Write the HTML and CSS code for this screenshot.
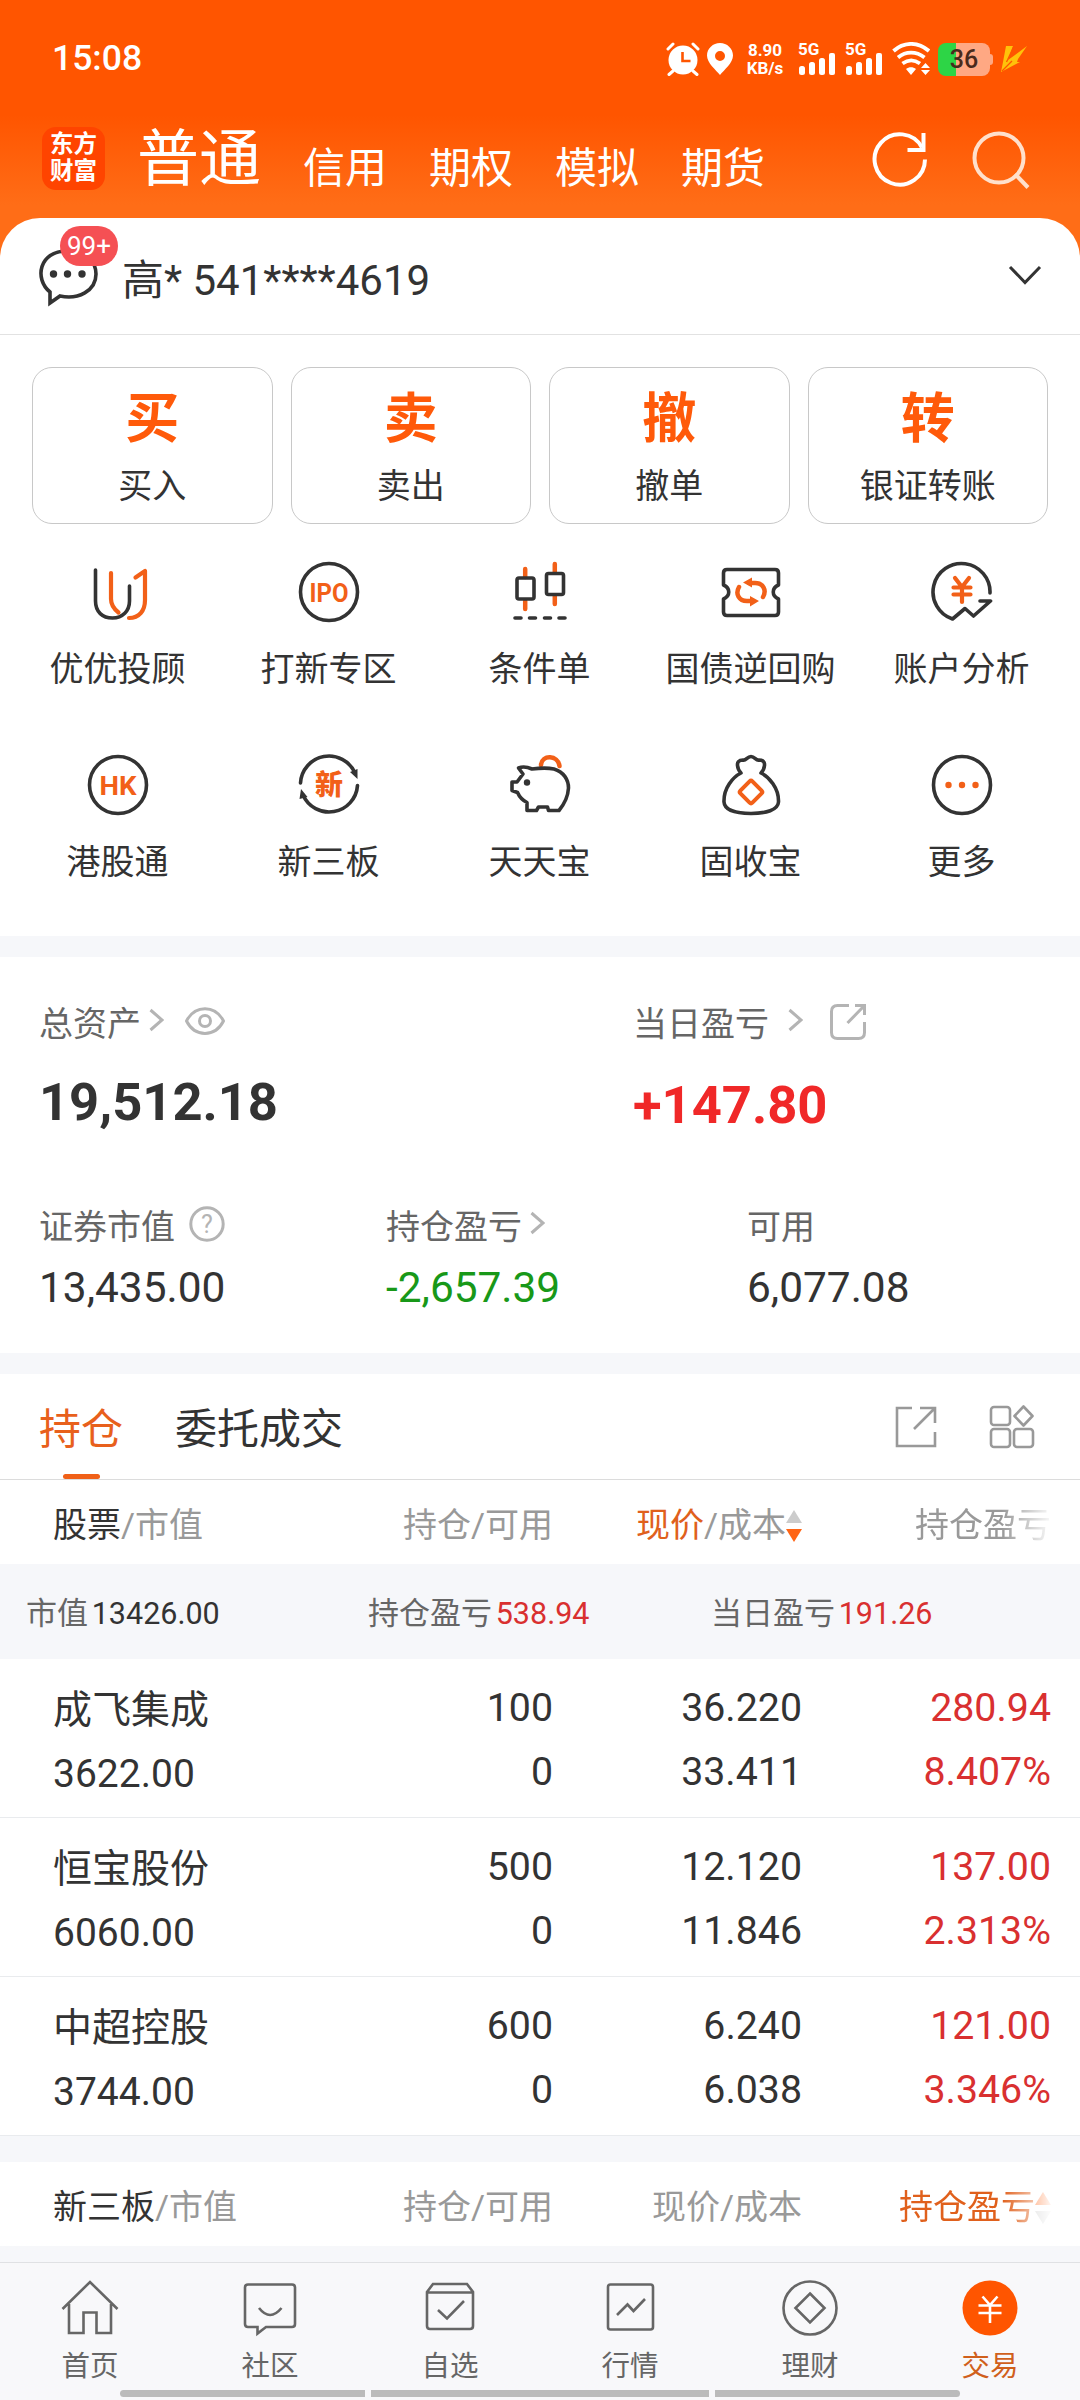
FILE: index.html
```html
<!DOCTYPE html>
<html lang="zh-CN">
<head>
  <meta charset="UTF-8" />
  <meta name="viewport" content="width=device-width, initial-scale=1.0">
  <title>交易</title>
  <link rel="stylesheet" href="styles.css">
</head>
<body>
  <header class="header">
    <div class="status-bar">
      <span class="time">15:08</span>
      <div class="status-icons">
        <svg class="alarm" width="34" height="34" viewBox="0 0 34 34">
          <circle cx="17" cy="18" r="14.500" fill="#fff"/>
          <path d="M2 7l5-5M32 7l-5-5M7 29l-4 3.500M27 29l4 3.500" stroke="#fff" stroke-width="3" stroke-linecap="round"/>
          <path d="M16.500 10v9h8" fill="none" stroke="#ff5500" stroke-width="2.600"/>
        </svg>
        <svg class="pin" width="26" height="34" viewBox="0 0 26 34">
          <path fill="#fff" fill-rule="evenodd" d="M13 1C6 1 0 6.500 0 13.500 0 21 9 28 13 33c4-5 13-12 13-19.500C26 6.500 20 1 13 1zm0 8a5 5 0 1 1 0 10 5 5 0 0 1 0-10z"/>
        </svg>
        <div class="speed"><span>8.90</span><span>KB/s</span></div>
        <div class="signal">
          <span>5G</span>
          <svg width="38" height="34" viewBox="0 0 38 34" fill="#fff">
            <rect x="1" y="24" width="6" height="9" rx="2.500"/><rect x="11" y="20" width="6" height="13" rx="2.500"/>
            <rect x="21" y="16" width="6" height="17" rx="2.500"/><rect x="31" y="11" width="6" height="22" rx="2"/>
          </svg>
        </div>
        <div class="signal">
          <span>5G</span>
          <svg width="38" height="34" viewBox="0 0 38 34" fill="#fff">
            <rect x="1" y="24" width="6" height="9" rx="2.500"/><rect x="11" y="20" width="6" height="13" rx="2.500"/>
            <rect x="21" y="16" width="6" height="17" rx="2.500"/><rect x="31" y="11" width="6" height="22" rx="2"/>
          </svg>
        </div>
        <svg class="wifi" width="38" height="34" viewBox="0 0 38 34">
          <path d="M1.500 9C12-.500 26-.500 37 9M6 15.500c8-6.500 18-6.500 26.500 0M10.500 21.500c5.500-4 12-4 17.500 0" fill="none" stroke="#fff" stroke-width="3.800"/>
          <path d="M14 27c3-2.500 7-2.500 10 0l-5 6zM33.500 21l4.500 5h-9zM33.500 33l-4.500-5h9z" fill="#fff"/>
        </svg>
        <div class="battery">36</div>
        <svg class="bolt" width="26" height="28" viewBox="0 0 26 28">
          <path d="M5 1h7L7 15l7-5L26 1 17 14l-1 3h3L0 27 2 17z" fill="#ffc20a"/>
          <path d="M13 1L6.500 15l-1 2M1 26l10-10" fill="none" stroke="#ff5500" stroke-width="1.300"/>
        </svg>
      </div>
    </div>
    <nav class="top-nav">
      <div class="logo">东方<br>财富</div>
      <span class="current">普通</span>
      <span>信用</span>
      <span>期权</span>
      <span>模拟</span>
      <span>期货</span>
      <div class="top-actions">
        <svg width="56" height="56" viewBox="0 0 56 56" fill="none" stroke="#fff" stroke-width="4">
          <path d="M53 28.500A25.200 25.200 0 1 1 50 16.500"/><path d="M51.500 2v17H35.500"/>
        </svg>
        <svg width="58" height="58" viewBox="0 0 58 58" fill="none" stroke="#ffe0cc" stroke-width="4">
          <circle cx="27" cy="27" r="24.500"/><path d="M43 43l13 13.500"/>
        </svg>
      </div>
    </nav>
  </header>

  <section class="account">
    <div class="message">
      <svg width="60" height="60" viewBox="0 0 60 60">
        <path d="M12 45C-4 32 1 4 29 4c19 0 29 11 29 23 0 17-18 26-36 22L12 56z" fill="none" stroke="#333" stroke-width="3.600"/>
        <circle cx="15.500" cy="27" r="3.700" fill="#333"/><circle cx="29.500" cy="27" r="3.700" fill="#333"/><circle cx="44" cy="27" r="3.700" fill="#333"/>
      </svg>
      <span class="badge">99+</span>
    </div>
    <span class="account-name">高* 541****4619</span>
    <svg class="arrow-down" width="34" height="20" viewBox="0 0 34 20"><path d="M2 2l15 15.500L32 2" fill="none" stroke="#333" stroke-width="3"/></svg>
  </section>

  <section class="actions">
    <div class="action"><b>买</b><span>买入</span></div>
    <div class="action"><b>卖</b><span>卖出</span></div>
    <div class="action"><b>撤</b><span>撤单</span></div>
    <div class="action"><b>转</b><span>银证转账</span></div>
  </section>

  <section class="functions">
    <div class="function">
      <svg viewBox="0 0 64 64">
        <path d="M9.500 10v31c0 11 7 17 17 17s17-7 17-17V26"/>
        <path class="orange" d="M25 13v26c0 6 3 10 7.500 13.500M49.500 17.500l9.500-6.500v29c0 11-6 18-16 18" stroke-width="4.200"/>
      </svg>
      <span>优优投顾</span>
    </div>
    <div class="function">
      <svg viewBox="0 0 64 64"><circle cx="32" cy="32" r="28.500"/><text class="latin" x="32" y="41.500" textLength="39" lengthAdjust="spacingAndGlyphs">IPO</text></svg>
      <span>打新专区</span>
    </div>
    <div class="function">
      <svg viewBox="0 0 64 64">
        <path class="orange" d="M17.200 9v8M17.200 41v8M46.800 4v8M46.800 36v8" stroke-width="4.500"/>
        <rect x="9" y="18" width="17" height="21" rx="2"/><rect x="38.500" y="13.500" width="17" height="21" rx="2"/>
        <path d="M7 58h6M21.500 58h6M36.500 58h6M51 58h6"/>
      </svg>
      <span>条件单</span>
    </div>
    <div class="function">
      <svg viewBox="0 0 64 64">
        <path d="M8 9.500h48q3.500 0 3.500 3.500v12c-7 3-7 11 0 14v13q0 3.500-3.500 3.500H8q-3.500 0-3.500-3.500V39c7-3 7-11 0-14V13q0-3.500 3.500-3.500z"/>
        <path class="orange" d="M20 27c-4 7 0 14 8 14h6M44 37c4-7 0-14-8-14h-6" stroke-width="4.500"/>
        <path class="orange-fill" d="M24 22.500l9-5v10zM40 41l-9 5.500V36z"/>
      </svg>
      <span>国债逆回购</span>
    </div>
    <div class="function">
      <svg viewBox="0 0 64 64">
        <path d="M60 33A28.500 28.500 0 1 0 22.500 59l12.500-10.500 8.500 7.500L60.500 41H50"/>
        <path class="orange" d="M25 18l7 9 7-9M23.500 27.500h17M23.500 34.500h17M32 28v14" stroke-width="4.200"/>
      </svg>
      <span>账户分析</span>
    </div>
    <div class="function">
      <svg viewBox="0 0 64 64"><circle cx="32" cy="32" r="28.500"/><text class="latin" x="32" y="41.500" textLength="37" lengthAdjust="spacingAndGlyphs">HK</text></svg>
      <span>港股通</span>
    </div>
    <div class="function">
      <svg viewBox="0 0 64 64">
        <path d="M3.500 30A28.500 28.500 0 0 1 58 20M60.500 32.500A28.500 28.500 0 0 1 6 42"/>
        <path class="dark-fill" d="M53 19l7.500-3v10zM10.500 44L2.500 46l1.500-10z"/>
        <text x="32" y="42" font-size="28">新</text>
      </svg>
      <span>新三板</span>
    </div>
    <div class="function">
      <svg viewBox="0 0 64 64">
        <path class="orange" d="M33 12c1-11 17-10 18.500 1" stroke-width="4.500"/>
        <path d="M10.500 15c5-2 9-1 13.500 1 8-1 17-1 22 0 10 3 14.500 11 14.500 19-.500 9-5 17-9.500 22.500H40.500l-1-3.500h-9l-2 3.500h-9.500V49.500C14 47 11.500 44 9.500 39.500l-5.500-2V29h5l6-8z"/>
        <circle class="dark-fill" cx="19" cy="29.500" r="3.200"/>
      </svg>
      <span>天天宝</span>
    </div>
    <div class="function">
      <svg viewBox="0 0 64 64">
        <path d="M22 20c-3-3-7-13 2-13 3 1 4-3.500 8-3.500S37 8 40 7c9 0 5 10 2 13 8 4 18 15 17.500 29C59 57 47 60.500 32 60.500S5.500 57 5 49C4.500 35 14 24 22 20z"/>
        <rect class="orange" x="23.500" y="30.500" width="17" height="17" rx="2" transform="rotate(45 32 39)" stroke-width="4"/>
      </svg>
      <span>固收宝</span>
    </div>
    <div class="function">
      <svg viewBox="0 0 64 64">
        <circle cx="32" cy="32" r="28.500"/>
        <g class="orange-fill"><circle cx="18.500" cy="32" r="3.200"/><circle cx="32" cy="32" r="3.200"/><circle cx="45.500" cy="32" r="3.200"/></g>
      </svg>
      <span>更多</span>
    </div>
  </section>

  <section class="assets">
    <div class="asset total-asset">
      <div class="label">总资产
        <svg class="chevron" width="15" height="24" viewBox="0 0 15 24"><path d="M1.500 2l11.500 10L1.500 22"/></svg>
        <svg class="eye" width="40" height="28" viewBox="0 0 40 28"><path d="M1.500 14C10-2.500 30-2.500 38.500 14 30 30.500 10 30.500 1.500 14z"/><circle cx="20" cy="14" r="5.500"/></svg>
      </div>
      <div class="value">19,512.18</div>
    </div>
    <div class="asset day-profit">
      <div class="label">当日盈亏
        <svg class="chevron" width="15" height="24" viewBox="0 0 15 24"><path d="M1.500 2l11.500 10L1.500 22"/></svg>
        <svg class="share" width="38" height="38" viewBox="0 0 38 38"><path d="M20 2.500H8.500q-6 0-6 6v21q0 6 6 6h21q6 0 6-6V19M26 2.500h9.500V12M35.500 2.500L18.500 20"/></svg>
      </div>
      <div class="value red">+147.80</div>
    </div>
    <div class="asset">
      <div class="label">证券市值
        <svg class="help" width="36" height="36" viewBox="0 0 36 36"><circle cx="18" cy="18" r="16.200"/><text x="18" y="26.500">?</text></svg>
      </div>
      <div class="amount">13,435.00</div>
    </div>
    <div class="asset hold-profit">
      <div class="label">持仓盈亏
        <svg class="chevron" width="15" height="24" viewBox="0 0 15 24"><path d="M1.500 2l11.500 10L1.500 22"/></svg>
      </div>
      <div class="amount green">-2,657.39</div>
    </div>
    <div class="asset">
      <div class="label">可用</div>
      <div class="amount">6,077.08</div>
    </div>
  </section>

  <section class="tabs">
    <div class="tab active">持仓</div>
    <div class="tab">委托成交</div>
    <div class="tab-tools">
      <svg width="42" height="42" viewBox="0 0 42 42"><path d="M17 2H2v38h38V26M25 2h15v15M40 2L19 23"/></svg>
      <svg width="46" height="44" viewBox="0 0 46 44"><rect x="2" y="2" width="19" height="18" rx="3"/><rect x="2" y="24" width="19" height="18" rx="3"/><rect x="25" y="24" width="19" height="18" rx="3"/><path d="M34.500 1.500l9 9.500-9 9.500-9-9.500z" stroke-linejoin="round"/></svg>
    </div>
  </section>

  <section class="holdings">
    <div class="row table-head">
      <div><em>股票</em>/市值</div>
      <div>持仓/可用</div>
      <div class="sorted"><strong>现价</strong>/成本<i class="sort"></i></div>
      <div class="fade">持仓盈亏</div>
    </div>
    <div class="summary">
      <span>市值 <b>13426.00</b></span>
      <span>持仓盈亏 <b class="up">538.94</b></span>
      <span>当日盈亏 <b class="up">191.26</b></span>
    </div>
    <div class="row stock">
      <div class="name">成飞集成<br>3622.00</div>
      <div>100<br>0</div>
      <div>36.220<br>33.411</div>
      <div class="up">280.94<br>8.407%</div>
    </div>
    <div class="row stock">
      <div class="name">恒宝股份<br>6060.00</div>
      <div>500<br>0</div>
      <div>12.120<br>11.846</div>
      <div class="up">137.00<br>2.313%</div>
    </div>
    <div class="row stock">
      <div class="name">中超控股<br>3744.00</div>
      <div>600<br>0</div>
      <div>6.240<br>6.038</div>
      <div class="up">121.00<br>3.346%</div>
    </div>
  </section>

  <section class="new-board">
    <div class="row table-head">
      <div><em>新三板</em>/市值</div>
      <div>持仓/可用</div>
      <div>现价/成本</div>
      <div class="sorted fade"><strong>持仓盈亏</strong><i class="sort asc"></i></div>
    </div>
  </section>

  <footer class="tab-bar">
    <div class="bar-item">
      <svg viewBox="0 0 60 60"><path d="M2.500 31L30 4l27.500 27M9 26v29h14.500V34.500h13V55H51V26"/></svg>
      <span>首页</span>
    </div>
    <div class="bar-item">
      <svg viewBox="0 0 60 60"><path d="M8 6.500h44q3 0 3 3V46q0 3-3 3H26l-8.500 6.500V49H8q-3 0-3-3V9.500q0-3 3-3zM19 30q11 14 22.500 0"/></svg>
      <span>社区</span>
    </div>
    <div class="bar-item">
      <svg viewBox="0 0 60 60"><path d="M7 14l6-8h34l6 8v34q0 3-3 3H10q-3 0-3-3zM7 14.500h46M18 32l9 8.500L44 23"/></svg>
      <span>自选</span>
    </div>
    <div class="bar-item">
      <svg viewBox="0 0 60 60"><rect x="8" y="6.500" width="45" height="45" rx="2.500"/><path d="M17 37l10.500-10.500 6 6.500L45 21"/></svg>
      <span>行情</span>
    </div>
    <div class="bar-item">
      <svg viewBox="0 0 60 60"><circle cx="30" cy="30" r="26.500"/><path d="M30 15.500L44.500 30 30 44.500 15.500 30z"/></svg>
      <span>理财</span>
    </div>
    <div class="bar-item selected">
      <svg viewBox="0 0 60 60"><circle cx="30" cy="30" r="27.500"/><path d="M22.500 18.500L30 27l7.500-8.500M18.500 27.500h23M18.500 35h23M30 27v18"/></svg>
      <span>交易</span>
    </div>
    <div class="home-bars"><i></i><i></i><i></i></div>
  </footer>
</body>
</html>
```
FILE: styles.css
```css
* {
  box-sizing: border-box;
}
body {
  margin: 0;
  width: 1080px;
  height: 2400px;
  overflow: hidden;
  font-family: Roboto, "Noto Sans CJK SC", sans-serif;
  color: #333;
  background: #f6f7fa;
}
svg {
  flex-shrink: 0;
}

/* header */
.header {
  height: 268px;
  color: #fff;
  background: linear-gradient(#ff5500 115px, #ff6d17 205px);
}
.status-bar {
  display: flex;
  align-items: center;
  height: 118px;
  padding-left: 52px;
}
.time {
  margin-top: -2px;
  font-size: 35.500px;
  font-weight: 500;
}
.status-icons {
  display: flex;
  align-items: center;
  margin-left: auto;
  padding-right: 53px;
}
.pin {
  margin-left: 7px;
}
.speed {
  display: flex;
  flex-direction: column;
  width: 38px;
  margin: 0 14px 0 13px;
  font-size: 17px;
  font-weight: 700;
  line-height: 18px;
  text-align: center;
}
.signal {
  position: relative;
  height: 34px;
  margin-right: 9px;
}
.signal span {
  position: absolute;
  top: -1px;
  left: 0;
  font-size: 17px;
  font-weight: 700;
  line-height: 17px;
}
.battery {
  position: relative;
  width: 52px;
  height: 33px;
  margin: 0 11px 0 8px;
  border-radius: 8px;
  font-size: 25px;
  font-weight: 500;
  line-height: 34px;
  text-align: center;
  color: #4a2a1c;
  background: linear-gradient(90deg, #2dd546 18px, #ffa883 18px);
}
.battery::after {
  content: "";
  position: absolute;
  right: -3px;
  top: 11px;
  width: 3px;
  height: 11px;
  border-radius: 0 3px 3px 0;
  background: #ffa883;
}
.top-nav {
  display: flex;
  height: 100px;
  padding: 0 50px 0 42px;
  font-size: 42px;
  line-height: 101px;
}
.top-nav span {
  margin-right: 42px;
}
.top-nav .current {
  margin: 0 42px 0 32px;
  font-size: 62px;
  line-height: 84px;
}
.logo {
  width: 63px;
  height: 63px;
  margin-top: 9px;
  padding-top: 4px;
  border-radius: 14px;
  font-size: 23.500px;
  font-weight: 700;
  line-height: 27px;
  text-align: center;
  background: #ff4400;
}
.top-actions {
  display: flex;
  gap: 44px;
  margin: 13px 0 0 auto;
}

/* account */
.account {
  display: flex;
  align-items: center;
  height: 117px;
  margin-top: -50px;
  padding: 1px 38px 0 38px;
  border-bottom: 1px solid #e2e2e2;
  border-radius: 40px 40px 0 0;
  background: #fff;
}
.message {
  position: relative;
  height: 60px;
}
.badge {
  position: absolute;
  top: -21px;
  left: 22px;
  width: 58px;
  height: 40px;
  border-radius: 20px;
  font-size: 26px;
  line-height: 41px;
  text-align: center;
  color: #fff;
  background: #f55054;
}
.account-name {
  margin-left: 24px;
  font-size: 42px;
}
.arrow-down {
  margin: 0 0 3px auto;
}

/* trade buttons */
.actions {
  display: flex;
  gap: 18px;
  height: 201px;
  padding: 32px 32px 12px;
  background: #fff;
}
.action {
  flex: 1;
  display: flex;
  flex-direction: column;
  align-items: center;
  border: 1px solid #c8c8c8;
  border-radius: 20px;
}
.action b {
  margin-top: 12px;
  font-size: 54px;
  line-height: 80px;
  color: #ff5a0a;
}
.action span {
  font-size: 34px;
  line-height: 53px;
}

/* function grid */
.functions {
  display: grid;
  grid-template-columns: repeat(5, 211px);
  grid-auto-rows: 193px;
  height: 400px;
  padding: 24px 12px 0;
  background: #fff;
}
.function {
  display: flex;
  flex-direction: column;
  align-items: center;
  gap: 18px;
  font-size: 34px;
  line-height: 54px;
}
.function svg {
  width: 64px;
  height: 64px;
  fill: none;
  stroke: #333;
  stroke-width: 3.6;
  stroke-linecap: round;
  stroke-linejoin: round;
}
.function .orange {
  stroke: #f26018;
}
.function .orange-fill {
  fill: #f26018;
  stroke: none;
}
.function .dark-fill {
  fill: #333;
  stroke: none;
}
.function text {
  fill: #f26018;
  stroke: none;
  font-weight: 900;
  text-anchor: middle;
}
.function .latin {
  font-size: 26px;
  font-weight: 700;
}

/* assets */
.assets {
  display: grid;
  grid-template-columns: 347px 247px 114px 1fr;
  grid-template-rows: 203px 1fr;
  height: 396px;
  margin: 21px 0;
  padding: 36px 0 0 39px;
  background: #fff;
}
.total-asset {
  grid-column: 1 / 3;
}
.day-profit {
  grid-column: 3 / 5;
}
.hold-profit {
  grid-column: 2 / 4;
}
.label {
  display: flex;
  align-items: center;
  height: 56px;
  font-size: 34px;
  color: #666;
}
.label svg {
  fill: none;
  stroke: #b4b4b4;
  stroke-width: 3;
}
.chevron {
  margin: 0 0 3px 8px;
}
.day-profit .chevron {
  margin-left: 19px;
}
.eye {
  margin-left: 21px;
}
.share {
  margin-left: 26px;
}
.help {
  margin-left: 14px;
}
.label .help text {
  fill: #b4b4b4;
  stroke: none;
  font-size: 25px;
  text-anchor: middle;
}
.value {
  margin-top: 21px;
  font-size: 52.500px;
  font-weight: 700;
  line-height: 64px;
}
.day-profit .label {
  padding-top: 1px;
}
.day-profit .value {
  margin-top: 24px;
}
.amount {
  margin-top: 6px;
  font-size: 42.400px;
  line-height: 60px;
}
.red {
  color: #f02828;
}
.green {
  color: #189818;
}

/* tabs */
.tabs {
  display: flex;
  height: 106px;
  padding: 0 45px 0 39px;
  border-bottom: 1px solid #dcdcdc;
  font-size: 42px;
  line-height: 111px;
  background: #fff;
}
.tab {
  position: relative;
  margin-right: 52px;
}
.tab.active {
  color: #e8601c;
}
.tab.active::after {
  content: "";
  position: absolute;
  left: 24px;
  bottom: 0;
  width: 37px;
  height: 5px;
  border-radius: 3px;
  background: #f06018;
}
.tab-tools {
  display: flex;
  align-items: center;
  gap: 52px;
  margin-left: auto;
}
.tab-tools svg {
  fill: none;
  stroke: #999;
  stroke-width: 2.6;
}

/* holdings */
.row {
  display: grid;
  grid-template-columns: 301px 199px 249px 249px;
  padding: 0 28px 0 53px;
  text-align: right;
  background: #fff;
}
.row > div:first-child {
  text-align: left;
}
.table-head {
  height: 84px;
  font-size: 34px;
  line-height: 91px;
  color: #999;
}
.table-head em {
  font-style: normal;
  color: #333;
}
.table-head strong {
  font-weight: 400;
  color: #e0601c;
}
.sorted {
  display: flex;
  align-items: center;
  justify-content: flex-end;
}
.sort {
  display: flex;
  flex-direction: column;
  gap: 6px;
}
.sort::before,
.sort::after {
  content: "";
  border: 8px solid transparent;
}
.sort::before {
  border-top: 0;
  border-bottom: 13px solid #ccc;
}
.sort::after {
  border-bottom: 0;
  border-top: 13px solid #ff6414;
}
.sort.asc::before {
  border-bottom-color: #ff6414;
}
.sort.asc::after {
  border-top-color: #ccc;
}
.fade {
  -webkit-mask-image: linear-gradient(90deg, #000 200px, transparent 252px);
  mask-image: linear-gradient(90deg, #000 200px, transparent 252px);
}
.summary {
  display: grid;
  grid-template-columns: 342px 343px 1fr;
  height: 95px;
  padding-left: 26px;
  font-size: 31px;
  line-height: 100px;
  color: #666;
}
.summary b {
  margin-left: -4px;
  font-size: 30.500px;
  font-weight: 400;
  color: #333;
}
.up,
.summary .up {
  color: #d93030;
}
.stock {
  height: 159px;
  padding-top: 17px;
  border-bottom: 1px solid #e9ebee;
  font-size: 39.300px;
  line-height: 64px;
}
.stock .name {
  padding-top: 2px;
  font-size: 39px;
}

.new-board {
  height: 126px;
  padding-top: 26px;
}

/* bottom bar */
.tab-bar {
  position: relative;
  display: flex;
  height: 138px;
  border-top: 1px solid #e0e1e4;
  background: #f8f8fa;
}
.bar-item {
  flex: 1;
  display: flex;
  flex-direction: column;
  align-items: center;
  padding-top: 15px;
  font-size: 28.500px;
  line-height: 57px;
  color: #666;
}
.bar-item svg {
  width: 60px;
  height: 60px;
  fill: none;
  stroke: #666;
  stroke-width: 2.6;
}
.bar-item.selected {
  color: #d0601c;
}
.selected svg {
  stroke: #fff;
}
.selected circle {
  fill: #ff5500;
  stroke: none;
}
.home-bars {
  position: absolute;
  left: 120px;
  bottom: 3px;
  display: flex;
  gap: 6px;
}
.home-bars i {
  width: 245px;
  height: 7px;
  border-radius: 4px 0 0 4px;
  background: #bbb;
}
.home-bars i:nth-child(2) {
  width: 338px;
  border-radius: 0;
}
.home-bars i:last-child {
  border-radius: 0 4px 4px 0;
}
```
